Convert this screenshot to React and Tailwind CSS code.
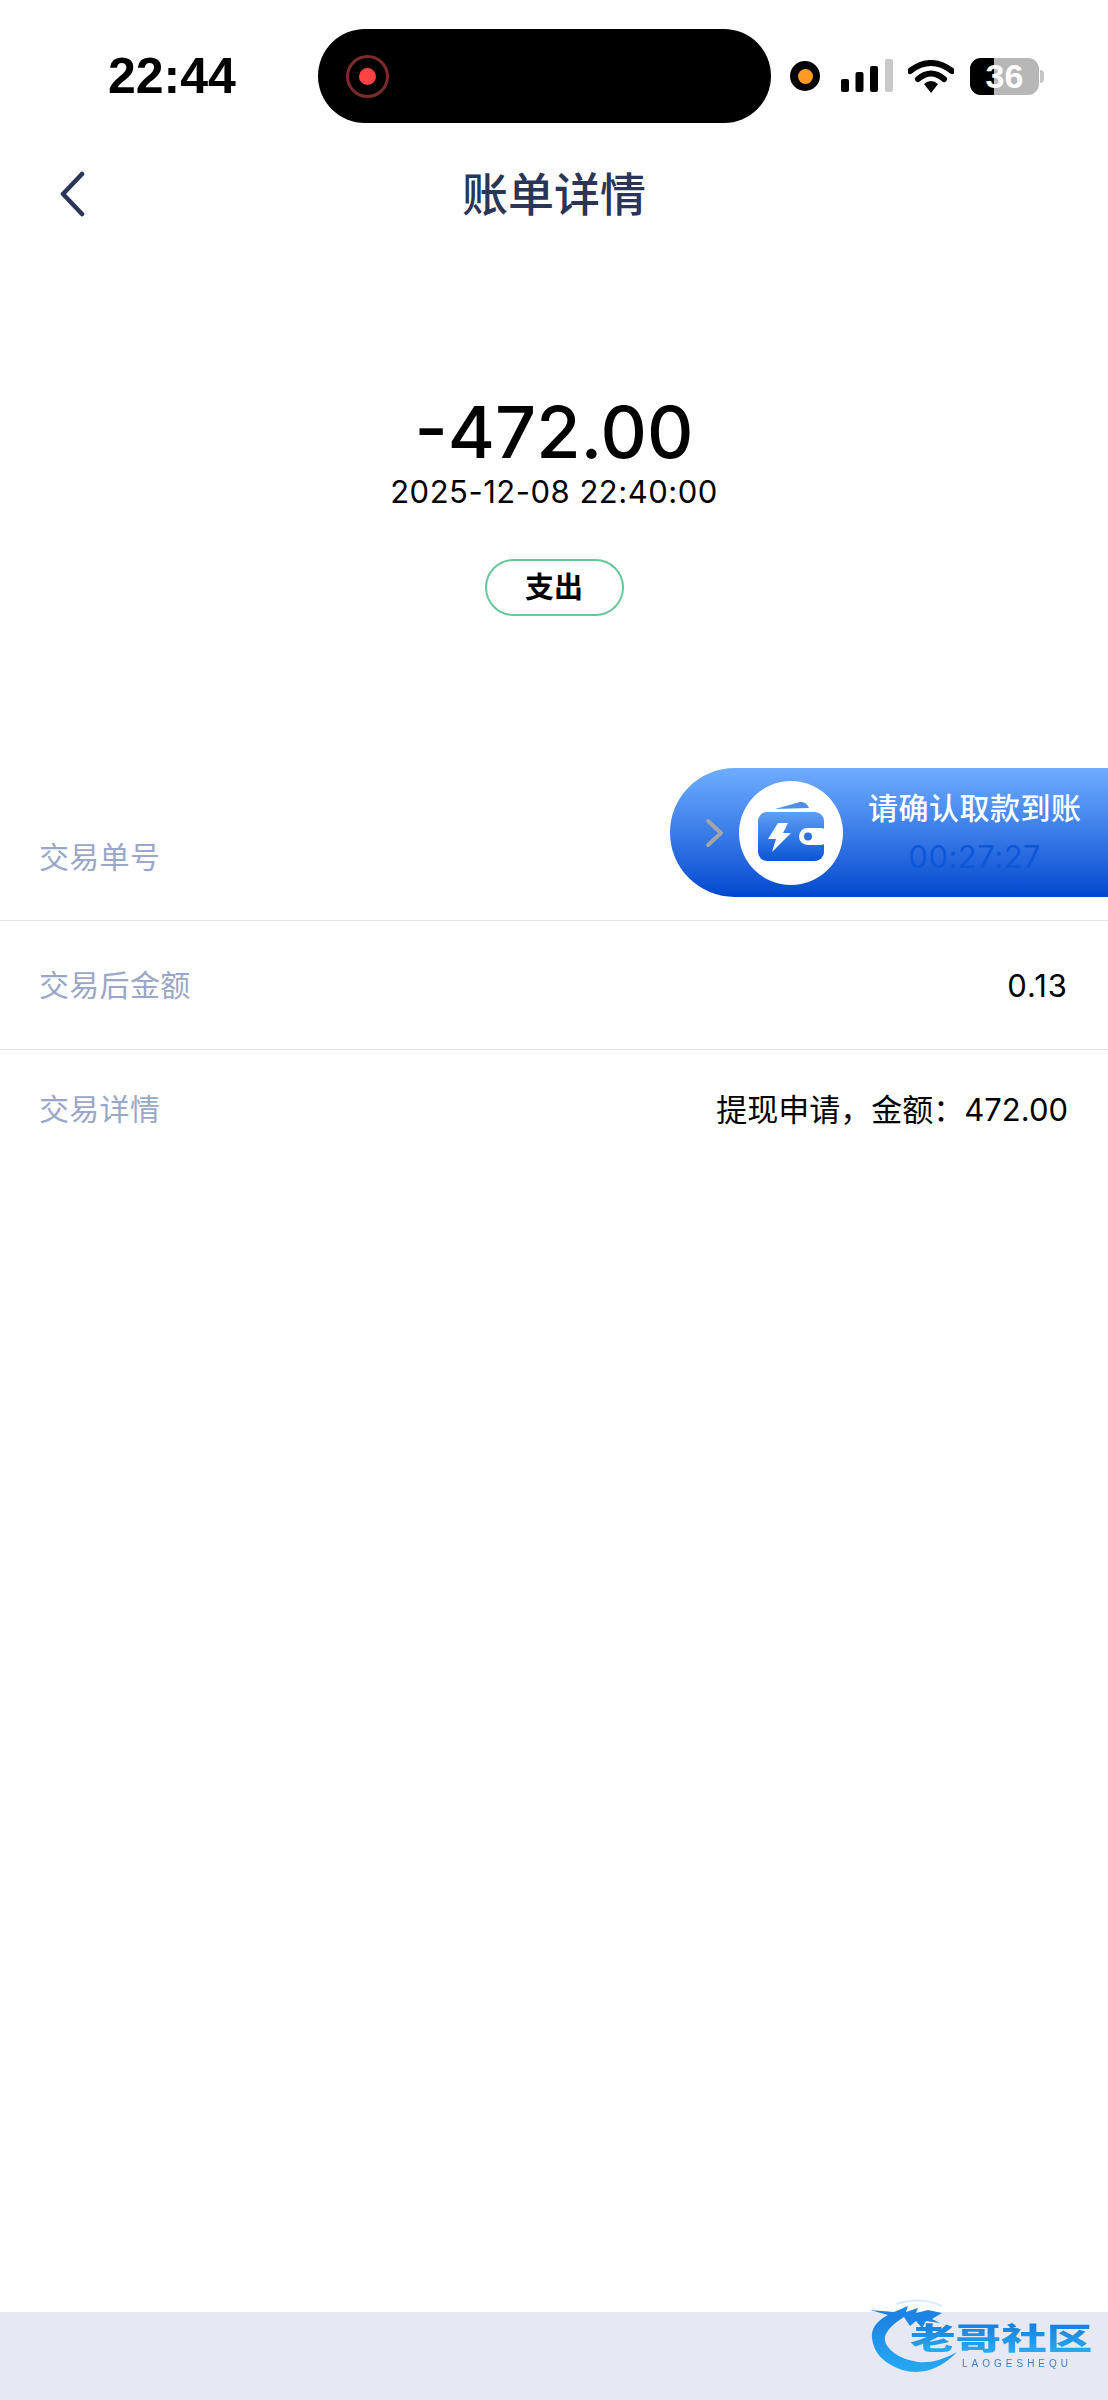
import React from 'react';

const cjk = "font-['Inter','Noto_Sans_CJK_SC',sans-serif]";

function StatusBar() {
  return (
    <div className="flex h-[123px] items-start pt-[29px]">
      <div className="flex h-[94px] w-[318px] items-center pl-[108px] font-['Liberation_Sans',sans-serif] text-[50px] leading-none font-bold text-black">
        22:44
      </div>
      {/* dynamic island */}
      <div className="flex h-[94px] w-[453px] items-center rounded-full bg-black pl-[28px]">
        <div className="flex h-[43px] w-[43px] items-center justify-center rounded-full border-[3px] border-[#7a2b2b]">
          <div className="h-[17px] w-[17px] rounded-full bg-[#ff4343]" />
        </div>
      </div>
      <div className="flex h-[94px] items-center pl-[19px]">
        <div className="flex h-[30px] w-[30px] items-center justify-center rounded-full bg-black">
          <div className="h-[15px] w-[15px] rounded-full bg-[#ff9a24]" />
        </div>
        <svg className="ml-[21px]" width="52" height="34" viewBox="0 0 52 34">
          <rect x="0" y="20" width="8" height="13" rx="2" fill="#000" />
          <rect x="14.500" y="13" width="8" height="20" rx="2" fill="#000" />
          <rect x="29" y="7" width="8" height="26" rx="2" fill="#000" />
          <rect x="44" y="0" width="8" height="33" rx="2" fill="#c9c9c9" />
        </svg>
        <svg className="ml-[15px]" width="46" height="33" viewBox="0 0 46 33">
          <path d="M2 11 Q23 -5 44 11" fill="none" stroke="#000" strokeWidth="6" strokeLinecap="round" />
          <path d="M10 19 Q23 8 36 19" fill="none" stroke="#000" strokeWidth="6" strokeLinecap="round" />
          <path d="M16 24 Q23 18 30 24 L23 33 Z" fill="#000" />
        </svg>
        <div className="ml-[16px] flex items-center">
          <div className="relative flex h-[37px] w-[69px] overflow-hidden rounded-[11px] bg-[#b7b7b7]">
            <div className="h-full w-[24px] bg-black" />
            <span className="absolute inset-0 flex items-center justify-center font-['Liberation_Sans',sans-serif] text-[34px] font-bold text-white">
              36
            </span>
          </div>
          <div className="ml-[1px] h-[13px] w-[4px] rounded-r-full bg-[#c4c4c4]" />
        </div>
      </div>
    </div>
  );
}

function NavBar() {
  return (
    <div className="relative flex h-[140px] items-center justify-center">
      <svg className="absolute left-[58px] top-[48px]" width="28" height="46" viewBox="0 0 28 46">
        <path d="M24 3 L5 23 L24 43" fill="none" stroke="#2b3557" strokeWidth="4.500" strokeLinecap="round" strokeLinejoin="round" />
      </svg>
      <h1 className={`${cjk} pt-[2px] text-[46px] leading-none font-medium text-[#2b3557]`}>账单详情</h1>
    </div>
  );
}

function Row({ label, value, valueClass, className }) {
  return (
    <div className={`flex items-center justify-between pl-[39px] pr-[40px] ${className}`}>
      <span className={`${cjk} text-[30px] leading-none tracking-[0.3px] text-[#9aa7c6]`}>{label}</span>
      {value && <span className={`${cjk} text-[31px] leading-none text-black ${valueClass}`}>{value}</span>}
    </div>
  );
}

function WalletIcon() {
  return (
    <svg width="104" height="104" viewBox="0 0 104 104">
      <defs>
        <linearGradient id="walletFill" x1="0" y1="0" x2="0" y2="1">
          <stop offset="0" stopColor="#5f9ff5" />
          <stop offset="1" stopColor="#0a54d6" />
        </linearGradient>
      </defs>
      <circle cx="52" cy="52" r="52" fill="#fff" />
      <path d="M36 28 L61 21 Q67 20 70 27 Z" fill="#4d8eeb" />
      <rect x="19" y="31" width="66" height="49" rx="9" fill="url(#walletFill)" />
      <rect x="60" y="47" width="30" height="17" rx="8.500" fill="#fff" />
      <rect x="85" y="44" width="6" height="23" fill="#fff" />
      <circle cx="69" cy="55.500" r="4" fill="#2f73df" />
      <path d="M39 42 L49 42 L44 52 L52 52 L33 71 L37 58 L29 58 Z" fill="#fff" />
    </svg>
  );
}

function ConfirmBanner() {
  return (
    <div className="absolute left-[670px] top-[768px] flex h-[129px] w-[438px] items-center rounded-l-[65px] bg-linear-to-b from-[#6fadff] to-[#0047cf]">
      <svg className="ml-[35px]" width="20" height="30" viewBox="0 0 20 30">
        <path d="M3 3 L16 15 L3 27" fill="none" stroke="#a5a5a5" strokeWidth="4" strokeLinecap="round" strokeLinejoin="round" />
      </svg>
      <div className="ml-[14px]">
        <WalletIcon />
      </div>
      <div className="ml-[25px] flex flex-col items-center">
        <span className={`${cjk} text-[30px] leading-none font-medium tracking-[0.5px] text-white`}>请确认取款到账</span>
        <span className="mt-[18px] font-['Inter',sans-serif] text-[31px] leading-none tracking-[0.5px] text-[#0e57d9]">00:27:27</span>
      </div>
    </div>
  );
}

function WatermarkLogo() {
  return (
    <div className="absolute left-[870px] top-[2298px] h-[78px] w-[224px] blur-[0.4px]">
      <svg className="absolute left-0 top-0" width="100" height="78" viewBox="0 0 100 78">
        <defs>
          <linearGradient id="dragon" x1="0" y1="0" x2="0" y2="1">
            <stop offset="0" stopColor="#1c7fe0" />
            <stop offset="1" stopColor="#25aaf5" />
          </linearGradient>
        </defs>
        <path d="M22 15 Q0 25 2 40 Q4 62 32 72 Q62 80 87 54 Q66 66 48 64 Q24 60 16 46 Q10 34 34 19 Z" fill="url(#dragon)" />
        <path d="M0 12 L24 14 L38 8 L36 14 L48 10 L46 15 L58 12 L72 15 L62 21 L70 25 L56 23 L52 30 L46 23 L40 28 L34 19 L18 17 Z" fill="#1c84e2" />
        <path d="M26 6 Q50 -2 72 8" fill="none" stroke="#dbe9fb" strokeWidth="2" />
      </svg>
      <div className={`${cjk} absolute left-[40px] top-[22px] origin-left scale-x-[1.52] bg-linear-to-b from-[#1579dc] to-[#2cb0f7] bg-clip-text text-[30px] leading-[36px] font-black whitespace-nowrap text-transparent`}>
        老哥社区
      </div>
      <div className="absolute left-[92px] top-[60px] font-['Liberation_Sans',sans-serif] text-[10px] leading-[12px] tracking-[4px] whitespace-nowrap text-[#3f7fcf]">
        LAOGESHEQU
      </div>
    </div>
  );
}

export default function App() {
  return (
    <div className="relative flex h-[2400px] w-[1108px] flex-col overflow-hidden bg-white">
      <StatusBar />
      <NavBar />

      {/* amount */}
      <div className="flex flex-col items-center pt-[127px]">
        <div className="font-['Inter',sans-serif] text-[72px] leading-[83px] font-medium text-black">-472.00</div>
        <div className="font-['Inter',sans-serif] text-[31px] leading-[38px] tracking-[0.5px] text-black">2025-12-08 22:40:00</div>
        <div className={`${cjk} mt-[48px] flex h-[57px] w-[139px] items-center justify-center rounded-full border-2 border-[#6ac59a] text-[29px] leading-none font-semibold text-black`}>
          支出
        </div>
      </div>

      {/* details */}
      <div className="mt-[178px]">
        <Row label="交易单号" className="h-[127px] border-b border-[#e5e6ec]" />
        <Row label="交易后金额" value="0.13" valueClass="tracking-[1px]" className="h-[129px] border-b border-[#e5e6ec]" />
        <Row label="交易详情" value="提现申请，金额：472.00" className="h-[118px]" />
      </div>

      <div className="flex-1" />
      <div className="h-[88px] bg-[#e6e9f3]" />

      <ConfirmBanner />
      <WatermarkLogo />
    </div>
  );
}
